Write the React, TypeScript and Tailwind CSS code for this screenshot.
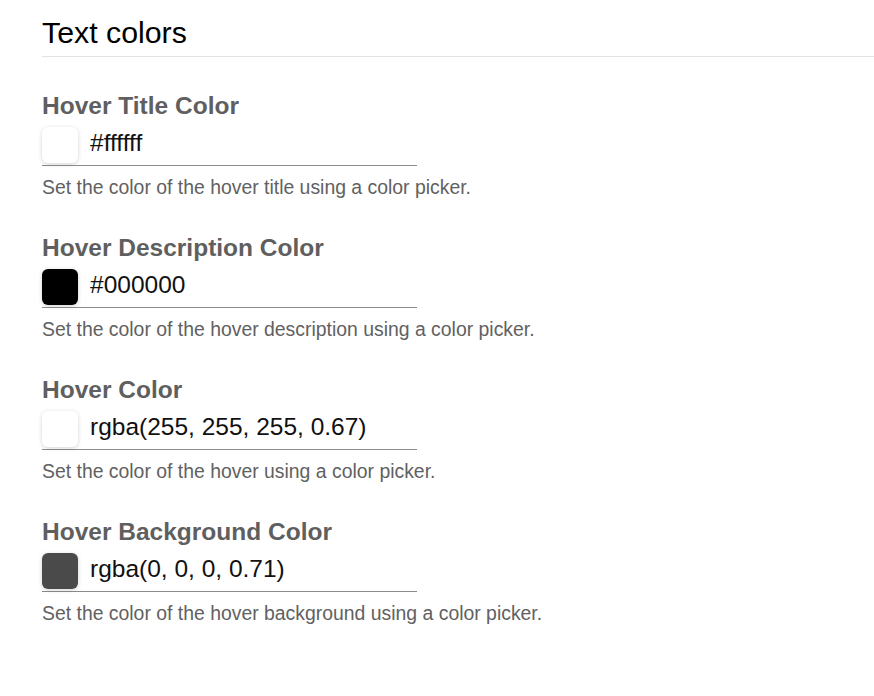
const fields = [
  { label: 'Hover Title Color', value: '#ffffff', swatch: '#ffffff', help: 'Set the color of the hover title using a color picker.' },
  { label: 'Hover Description Color', value: '#000000', swatch: '#000000', help: 'Set the color of the hover description using a color picker.' },
  { label: 'Hover Color', value: 'rgba(255, 255, 255, 0.67)', swatch: 'rgba(255, 255, 255, 0.67)', help: 'Set the color of the hover using a color picker.' },
  { label: 'Hover Background Color', value: 'rgba(0, 0, 0, 0.71)', swatch: 'rgba(0, 0, 0, 0.71)', help: 'Set the color of the hover background using a color picker.' },
]

const ColorField = ({ label, value, swatch, help }: (typeof fields)[number]) => {
  return (
    <div className="mt-[36px]">
      <label className="block text-[24.5px] leading-[28px] font-bold text-[#5f5f5f]">{label}</label>
      <div className="mt-[7px] flex w-[375px] items-center gap-[12px] border-b border-[#8c8c8c] pb-[2px]">
        <span
          className="block h-[36px] w-[36px] rounded-[6px] shadow-[0_1px_4px_rgba(0,0,0,0.18)]"
          style={{ backgroundColor: swatch }}
        />
        <span className="pb-[5px] text-[24.5px] leading-[28px] text-[#111]">{value}</span>
      </div>
      <p className="mt-[10px] text-[19.4px] leading-[22px] text-[#616161]">{help}</p>
    </div>
  )
}

export default function App() {
  return (
    <div className="min-h-screen bg-white pl-[42px] font-['Liberation_Sans',Arial,sans-serif]">
      <h1 className="border-b border-[#e2e2e2] pt-[15px] pb-[5px] text-[30.3px] leading-[36px] font-normal text-black">
        Text colors
      </h1>
      <div className="-mt-px flex flex-col">
        {fields.map((f) => (
          <ColorField key={f.label} {...f} />
        ))}
      </div>
    </div>
  )
}
